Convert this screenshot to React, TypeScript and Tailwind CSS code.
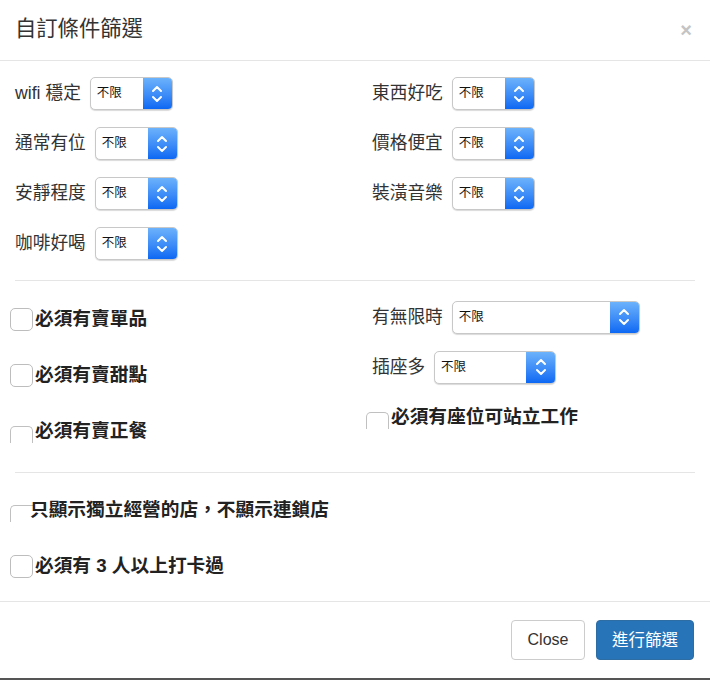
import React from "react";

const font = { fontFamily: '"Helvetica Neue", "Liberation Sans", "Noto Sans CJK TC", sans-serif' };

function Sel({ w }: { w: number }) {
  return (
    <div className="flex h-[33px] rounded-[5px] border border-[#c8c8c8] shadow-[0_1px_1px_rgba(0,0,0,0.15)] overflow-hidden bg-white" style={{ width: w }}>
      <div className="flex-1 flex items-center pl-[6px] text-[12.5px] text-[#111]">不限</div>
      <div className="w-[29px] flex items-center justify-center bg-gradient-to-b from-[#6cb2fb] to-[#0b68f3]">
        <svg width="14" height="20" viewBox="0 0 14 20" fill="none" stroke="white" strokeWidth="2" strokeLinecap="round" strokeLinejoin="round">
          <path d="M3 7 L7 3 L11 7" />
          <path d="M3 13 L7 17 L11 13" />
        </svg>
      </div>
    </div>
  );
}

function SelRow({ label, w }: { label: string; w: number }) {
  return (
    <div className="flex items-center h-[33px] mb-[17px]">
      <span className="text-[17.7px] text-[#333] mr-[9px] whitespace-nowrap">{label}</span>
      <Sel w={w} />
    </div>
  );
}

function Check({ label, cut }: { label: string; cut?: boolean }) {
  return (
    <div className="flex items-center h-[56px]">
      {cut ? (
        <div className="w-[23px] h-[23px] flex items-end">
          <div className="w-[23px] h-[17px] mt-[6px] border-t border-l border-r border-[#c0c0c0] rounded-t-[5px]" />
        </div>
      ) : (
        <div className="w-[23px] h-[23px] border border-[#bdbdbd] rounded-[5px] bg-white" />
      )}
      <span className="ml-[2px] text-[18.7px] font-bold text-[#222] whitespace-nowrap">{label}</span>
    </div>
  );
}

export default function App() {
  return (
    <div className="w-[710px] h-[680px] bg-white flex flex-col border-b-2 border-[#555]" style={font}>
      <div className="h-[61px] border-b border-[#e5e5e5] flex items-center justify-between px-[15px]">
        <span className="text-[21.3px] text-[#333]">自訂條件篩選</span>
        <span className="text-[20px] text-[#c4c4c4] font-bold mr-[3px]">×</span>
      </div>
      <div className="flex-1 px-[15px]">
        <div className="flex pt-[16px]">
          <div className="w-[357px]">
            <SelRow label="wifi 穩定" w={83} />
            <SelRow label="通常有位" w={83} />
            <SelRow label="安靜程度" w={83} />
            <SelRow label="咖啡好喝" w={83} />
          </div>
          <div>
            <SelRow label="東西好吃" w={83} />
            <SelRow label="價格便宜" w={83} />
            <SelRow label="裝潢音樂" w={83} />
          </div>
        </div>
        <div className="border-t border-[#e5e5e5] mt-[3px]" />
        <div className="flex">
          <div className="w-[352px] -ml-[5px] pt-[10px]">
            <Check label="必須有賣單品" />
            <Check label="必須有賣甜點" />
            <Check label="必須有賣正餐" cut />
          </div>
          <div className="pt-[11px] ml-[10px]">
            <div className="h-[50px] flex items-center">
              <span className="text-[17.7px] text-[#333] mr-[9px]">有無限時</span>
              <Sel w={188} />
            </div>
            <div className="h-[50px] flex items-center">
              <span className="text-[17.7px] text-[#333] mr-[9px]">插座多</span>
              <Sel w={122} />
            </div>
            <div className="-ml-[6px] -mt-[3px]">
              <Check label="必須有座位可站立工作" cut />
            </div>
          </div>
        </div>
        <div className="border-t border-[#e5e5e5] mt-[13px]" />
        <div className="-ml-[5px] pt-[9px]">
          <div className="flex items-center h-[56px]">
            <div className="w-[23px] h-[23px] flex items-end">
              <div className="w-[23px] h-[17px] border-t border-l border-[#c0c0c0] rounded-tl-[5px]" />
            </div>
            <span className="-ml-[3px] text-[18.7px] font-bold text-[#222] whitespace-nowrap">只顯示獨立經營的店，不顯示連鎖店</span>
          </div>
          <Check label="必須有 3 人以上打卡過" />
        </div>
      </div>
      <div className="h-[77px] border-t border-[#e5e5e5] flex justify-end items-start pt-[18px] pr-[16px] gap-[11px]">
        <button className="h-[40px] w-[74px] border border-[#ccc] rounded-[4px] text-[16px] text-[#333] bg-white">Close</button>
        <button className="h-[40px] w-[98px] rounded-[4px] text-[16.5px] text-white bg-[#2874b8] border border-[#2e6da4]">進行篩選</button>
      </div>
    </div>
  );
}
